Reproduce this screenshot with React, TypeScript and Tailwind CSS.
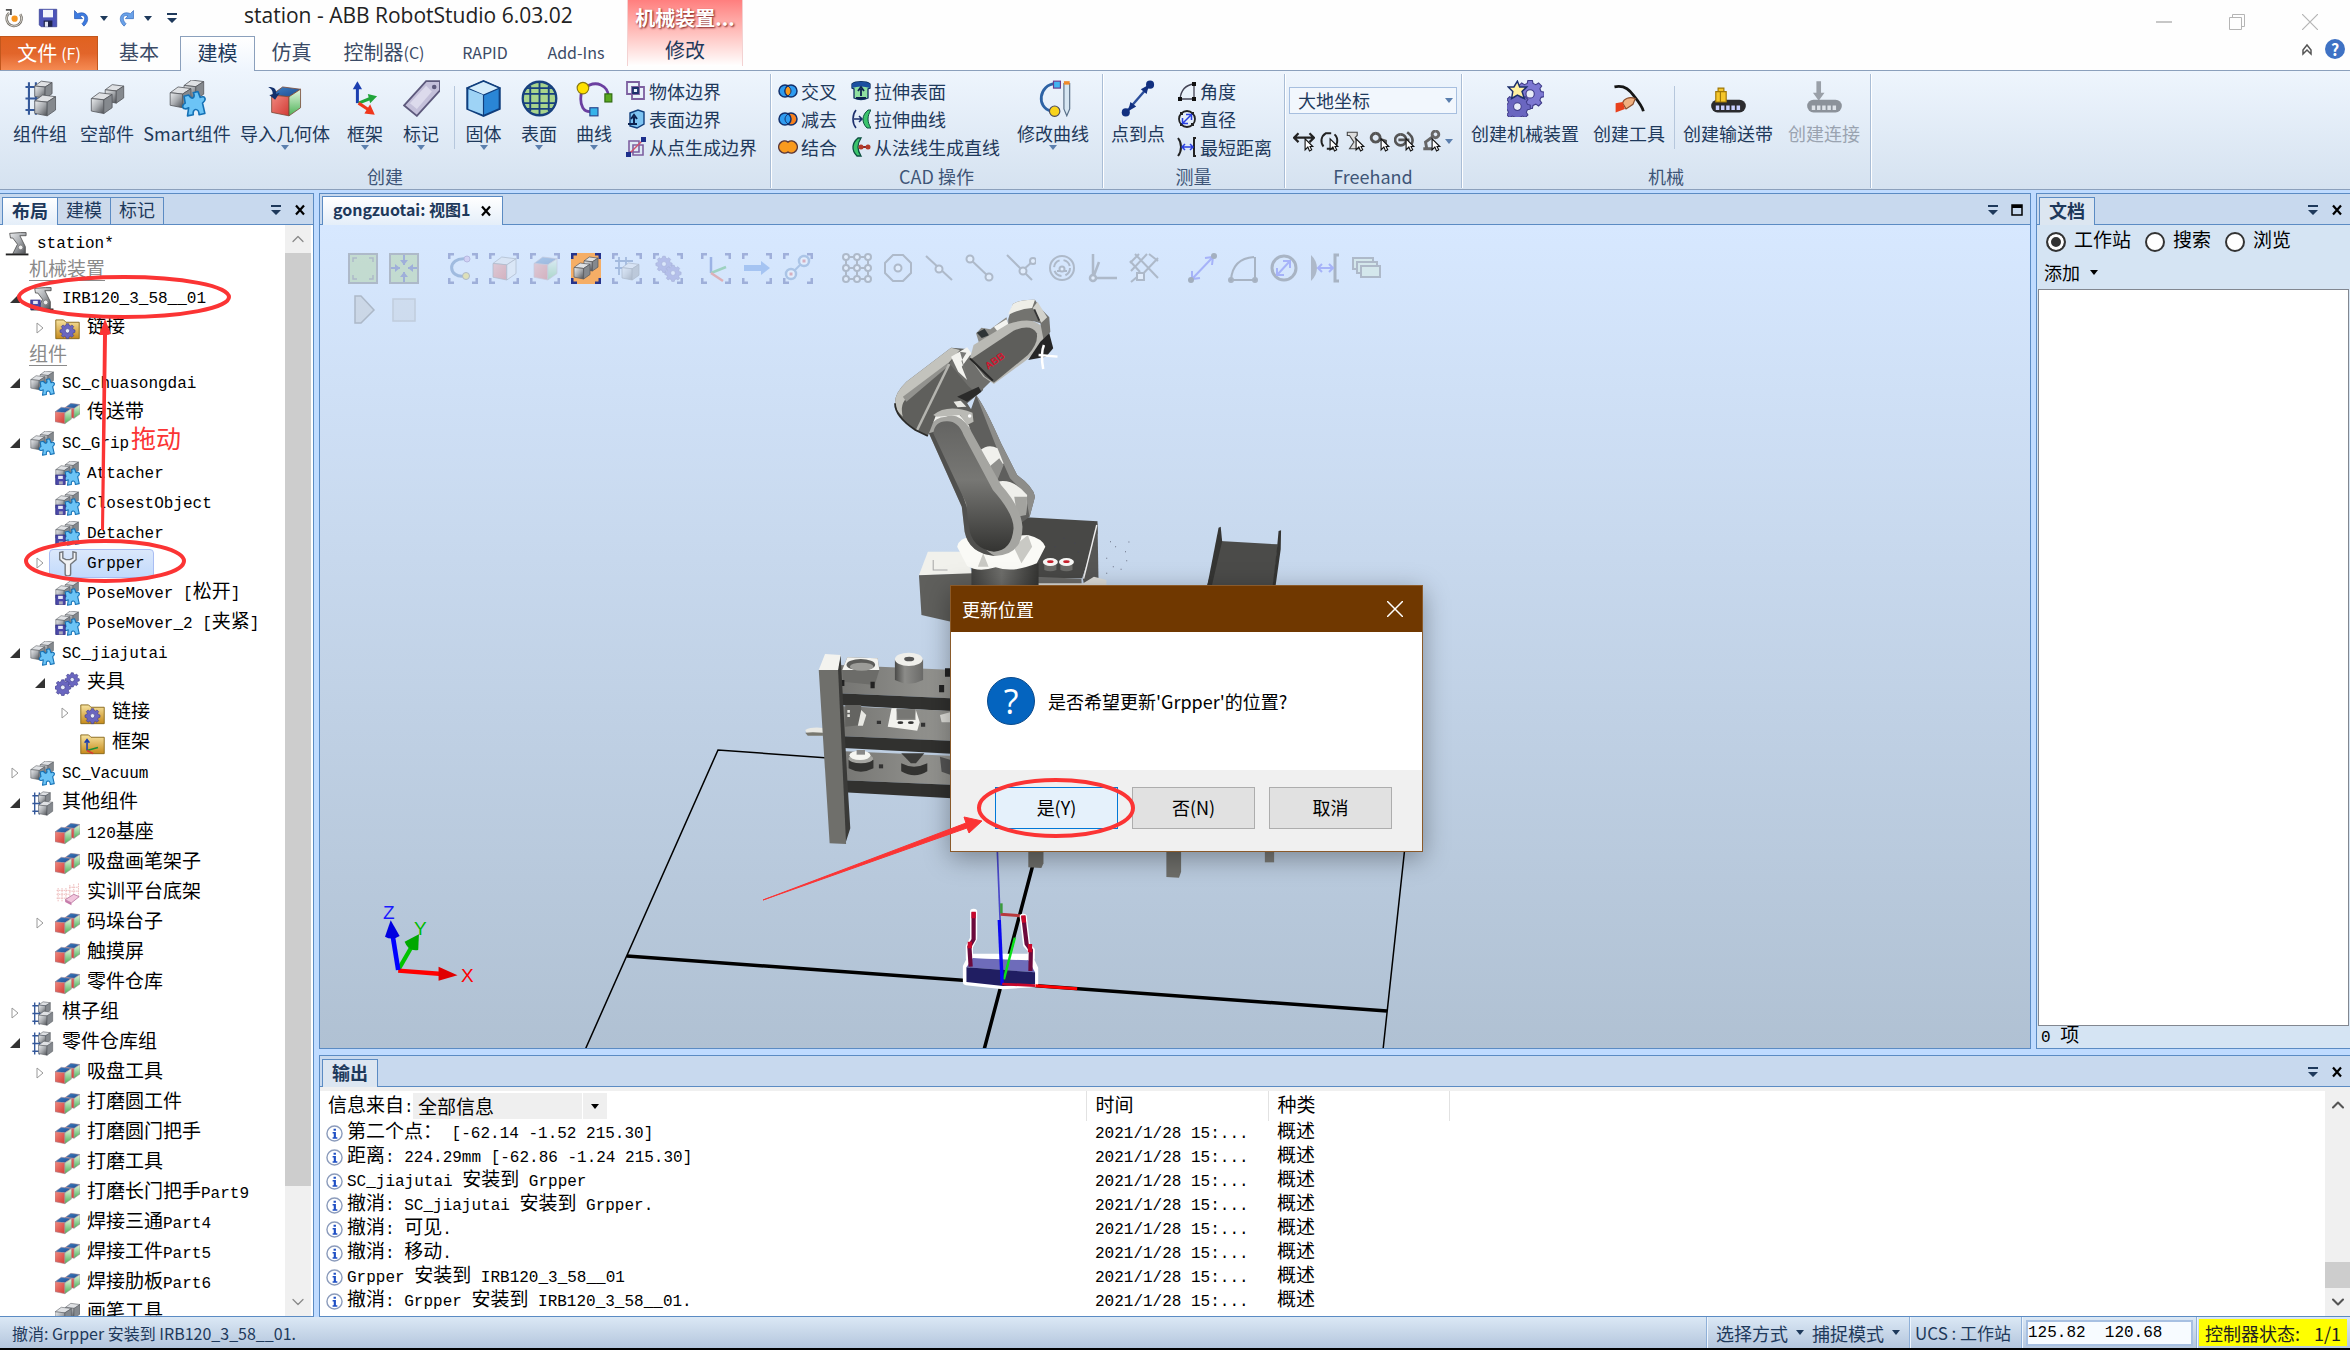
import type { ReactNode } from 'react';
import { ChevronDown, ChevronUp } from 'lucide-react';

/* ---------- text helpers ---------- */

const CJK_RUN = /([\u3000-\u9fff\uff00-\uffef]+)/;

// Terminal-like face: latin runs are set smaller so two latin cells equal one han cell
function Song({ children, underline }: { children: string; underline?: boolean }) {
  return (
    <span
      className={`inline-block whitespace-pre pt-[2px] font-['Liberation_Mono','Noto_Sans_CJK_SC',monospace] text-base ${
        underline ? 'underline underline-offset-4' : ''
      }`}
    >
      {children.split(CJK_RUN).map((run, i) =>
        i % 2 ? (
          <span key={i} className="text-[19px] leading-none">
            {run}
          </span>
        ) : (
          run
        ),
      )}
    </span>
  );
}

/* ---------- small glyphs ---------- */

function Caret({ className = 'text-[#5b7fae]' }: { className?: string }) {
  return (
    <svg viewBox="0 0 8 5" className={`h-[5px] w-2 shrink-0 ${className}`}>
      <path d="M0 0h8L4 5z" fill="currentColor" />
    </svg>
  );
}

function PanelMenuIcon() {
  return (
    <svg viewBox="0 0 12 12" className="h-3 w-3 text-[#1e395b]">
      <path d="M1 1h10v2H1zM1 6h10l-5 5z" fill="currentColor" />
    </svg>
  );
}

function CloseGlyph() {
  return (
    <svg viewBox="0 0 12 12" className="h-3 w-3">
      <path d="M2 1.5 10 10.5M10 1.5 2 10.5" stroke="#000" strokeWidth="2.2" />
    </svg>
  );
}

function Defs() {
  return (
    <svg className="absolute h-0 w-0" aria-hidden="true">
      <defs>
        <linearGradient id="gray" x1="0" y1="0" x2="1" y2="1">
          <stop offset="0" stopColor="#eceef0" />
          <stop offset=".5" stopColor="#a9acb0" />
          <stop offset="1" stopColor="#4c4f54" />
        </linearGradient>
        <linearGradient id="red" x1="0" y1="0" x2="1" y2="1">
          <stop offset="0" stopColor="#f08a80" />
          <stop offset="1" stopColor="#d23a34" />
        </linearGradient>
        <linearGradient id="green" x1="0" y1="0" x2="0" y2="1">
          <stop offset="0" stopColor="#e6f8e2" />
          <stop offset="1" stopColor="#4cb256" />
        </linearGradient>
        <linearGradient id="blue" x1="0" y1="0" x2="1" y2="1">
          <stop offset="0" stopColor="#3f7fc4" />
          <stop offset="1" stopColor="#1d4c90" />
        </linearGradient>
        <linearGradient id="gold" x1="0" y1="0" x2="0" y2="1">
          <stop offset="0" stopColor="#f7e3a0" />
          <stop offset="1" stopColor="#c68a1a" />
        </linearGradient>
        <linearGradient id="arm" x1="0" y1="0" x2="1" y2="0">
          <stop offset="0" stopColor="#4a4a48" />
          <stop offset=".35" stopColor="#8c8c89" />
          <stop offset="1" stopColor="#6a6a68" />
        </linearGradient>
        <linearGradient id="face" x1="0" y1="0" x2="0" y2="1">
          <stop offset="0" stopColor="#646462" />
          <stop offset=".45" stopColor="#777774" />
          <stop offset="1" stopColor="#343432" />
        </linearGradient>
        <linearGradient id="barrel" x1="0" y1="0" x2="1" y2="0">
          <stop offset="0" stopColor="#424240" />
          <stop offset=".45" stopColor="#6e6e6b" />
          <stop offset="1" stopColor="#353533" />
        </linearGradient>
        <linearGradient id="shelf" x1="0" y1="0" x2="1" y2="0">
          <stop offset="0" stopColor="#757572" />
          <stop offset="1" stopColor="#9b9b97" />
        </linearGradient>
      </defs>
    </svg>
  );
}

function Ico({ box = '0 0 32 32', className, children }: { box?: string; className: string; children: ReactNode }) {
  return (
    <svg viewBox={box} className={`shrink-0 ${className}`} fill="none">
      {children}
    </svg>
  );
}

interface CubeProps {
  x: number;
  y: number;
  s: number;
  top?: string;
  front?: string;
  side?: string;
  edge?: string;
}

function Cube({ x, y, s, top = '#dfe1e4', front = 'url(#gray)', side = '#85898e', edge = '#55585d' }: CubeProps) {
  return (
    <g transform={`translate(${x} ${y}) scale(${s})`} stroke={edge} strokeWidth={0.7 / s} strokeLinejoin="round">
      <path d="M0 .28 .38 0 1 .08 .6 .34z" fill={top} />
      <path d="M0 .28 .6 .34V1L0 .88z" fill={front} />
      <path d="M.6 .34 1 .08V.72L.6 1z" fill={side} />
    </g>
  );
}

const COLORED = { top: 'url(#blue)', front: 'url(#red)', side: 'url(#green)', edge: '#a58c98' };

const GEAR = 'M-1.6-8h3.2l.5 2.2 2 .9 2-1.3 2.2 2.2-1.3 2 .9 2 2.2.5v3.2l-2.2.5-.9 2 1.3 2-2.2 2.2-2-1.3-2 .9-.5 2.2h-3.2l-.5-2.2-2-.9-2 1.3-2.2-2.2 1.3-2-.9-2-2.2-.5v-3.2l2.2-.5.9-2-1.3-2 2.2-2.2 2 1.3 2-.9z';

function Gear({ x, y, s, fill = '#6a66c0' }: { x: number; y: number; s: number; fill?: string }) {
  return (
    <g transform={`translate(${x} ${y}) scale(${s})`}>
      <path d={GEAR} transform="translate(0 -1.7)" fill={fill} stroke="#3f3c88" strokeWidth=".8" />
      <circle r="3" cy="0" fill="#e8ecf8" stroke="#3f3c88" strokeWidth=".8" />
    </g>
  );
}

const PUZZLE = 'M1 1l4-1c3 5 6 2 4-2l4-1 2 5c4-2 6 2 2 5l2 9-5 1c0-6-6-6-5 0l-5 1 1-7c-5 3-7-2-3-4z';

function GroupGlyph() {
  return (
    <>
      <path d="M6 2v28M12 2v28M3 6h18M3 16h14M3 26h14" stroke="#34589a" strokeWidth="1.8" />
      <Cube x={11} y={1} s={15} />
      <Cube x={11} y={13} s={18} />
    </>
  );
}

function SmartGlyph() {
  return (
    <>
      <Cube x={13} y={0} s={17} />
      <Cube x={1} y={6} s={18} />
      <path d={PUZZLE} transform="translate(12 13)" fill="#6cc4f6" stroke="#1571b5" strokeWidth="1.4" strokeLinejoin="round" />
    </>
  );
}

function Floppy() {
  return (
    <g>
      <rect x="1" y="18" width="12" height="12" fill="#4b49a8" stroke="#2c2a80" />
      <rect x="4" y="19" width="6" height="4" fill="#e6e8f6" />
      <rect x="5" y="26" width="5" height="4" fill="#aab" />
    </g>
  );
}

function RobotGlyph() {
  return (
    <>
      <path d="M1 30h29" stroke="#222" strokeWidth="2.4" />
      <path d="M6 3l14-1h7v4h-8l7 14v9H10l6-12-6-8H7z" fill="url(#gray)" stroke="#444" />
      <circle cx="20" cy="21" r="3" fill="#eee" stroke="#777" />
    </>
  );
}

/* ---------- tree icons ---------- */

type TreeIcon = 'robot' | 'robotSaved' | 'linkFolder' | 'frameFolder' | 'smart' | 'smartSaved' | 'part' | 'wrench' | 'gears' | 'group' | 'mesh' | 'grayPart';

function TreeGlyph({ icon }: { icon: TreeIcon }) {
  const folder = <path d="M1 5h10l3 3h17v21H1z" fill="url(#gold)" stroke="#8a6a1c" strokeWidth="1.2" />;
  const glyphs: Record<TreeIcon, ReactNode> = {
    robot: <RobotGlyph />,
    robotSaved: (
      <>
        <RobotGlyph />
        <Floppy />
      </>
    ),
    linkFolder: (
      <>
        {folder}
        <Gear x={16} y={19} s={0.95} />
      </>
    ),
    frameFolder: (
      <>
        {folder}
        <path d="M9 25V12M6 15l3-4 3 4" stroke="#1b3fae" strokeWidth="2" />
        <path d="M9 25l14-4" stroke="#1d8f35" strokeWidth="2" />
        <path d="M9 25l8 4" stroke="#d33" strokeWidth="2" />
      </>
    ),
    smart: <SmartGlyph />,
    smartSaved: (
      <>
        <SmartGlyph />
        <Floppy />
      </>
    ),
    part: (
      <>
        <Cube x={13} y={3} s={19} {...COLORED} />
        <Cube x={0} y={8} s={21} {...COLORED} />
      </>
    ),
    wrench: (
      <path
        d="M6 2v9l7 6v12c0 4 7 4 7 0V17l7-6V2l-4-1v8l-4 2h-5l-4-2V1z"
        fill="#f2f3f5"
        stroke="#74787e"
        strokeWidth="1.8"
      />
    ),
    gears: (
      <>
        <Gear x={22} y={11} s={0.9} />
        <Gear x={10} y={21} s={1} />
      </>
    ),
    group: <GroupGlyph />,
    mesh: (
      <>
        <path
          d="M2 12h16M2 17h16M2 22h16M4 9v18M9 9v18M14 9v18M19 5v18M24 4v16M18 8h12M18 13h12M30 3v16"
          stroke="#e9a9a9"
          strokeWidth="1"
          strokeDasharray="2 1"
        />
        <path d="M13 24l11-7 7 3-10 8z" fill="#f2c6dd" stroke="#b3719b" />
        <path d="M13 24l8 4v3l-8-4z" fill="#c77bab" />
      </>
    ),
    grayPart: (
      <>
        <Cube x={13} y={3} s={19} />
        <Cube x={0} y={8} s={21} />
      </>
    ),
  };
  return <Ico className="h-[25px] w-[25px]">{glyphs[icon]}</Ico>;
}

/* ---------- title bar ---------- */

function TitleBar() {
  return (
    <div className="flex h-9 items-center gap-[14px] px-1">
      <Ico className="h-5 w-5">
        <path d="M8 8a12 12 0 1 0 18 2" stroke="#77736c" strokeWidth="4" />
        <path d="M8 8a12 12 0 1 0 18 2" stroke="#d6d2ca" strokeWidth="1.6" />
        <path d="M3 3l8 0v8" stroke="#555" strokeWidth="3" />
        <circle cx="17" cy="17" r="5" fill="#f6951e" />
      </Ico>
      <Ico className="h-5 w-5">
        <path d="M2 2h28v28H5l-3-3z" fill="#4b54b8" stroke="#2c3388" />
        <path d="M8 3h16v12H8z" fill="#f1f4fb" />
        <path d="M9 20h14v10H9z" fill="#20264e" />
        <path d="M11 22h5v8h-5z" fill="#dfe4f4" />
      </Ico>
      <div className="flex items-center gap-2">
        <Ico className="h-5 w-5">
          <path d="M4 4v13h13l-4-4c8-4 10 6 3 12l3 4C31 19 24 3 9 9z" fill="#3d7be0" stroke="#1d4fae" />
        </Ico>
        <Caret className="text-[#1e395b]" />
        <Ico className="h-5 w-5">
          <path d="M28 4v13H15l4-4c-8-4-10 6-3 12l-3 4C1 19 8 3 23 9z" fill="#6aa2e8" stroke="#2b62b8" />
        </Ico>
        <Caret className="text-[#1e395b]" />
      </div>
      <PanelMenuIcon />
      <h1 className="ml-[52px] pb-[7px] font-['Open_Sans','Noto_Sans_CJK_SC',sans-serif] text-[21px] leading-7 text-[#222]">
        station - ABB RobotStudio 6.03.02
      </h1>
      <div className="ml-auto flex items-center gap-[57px] pr-7 pt-2 text-[#b5b5b5]">
        <button aria-label="最小化">
          <Ico box="0 0 16 16" className="h-4 w-4">
            <path d="M0 8h16" stroke="currentColor" strokeWidth="1.5" />
          </Ico>
        </button>
        <button aria-label="还原">
          <Ico box="0 0 16 16" className="h-4 w-4">
            <path d="M.5 3.5h12v12H.5zM3.5 3.5v-3h12v12h-3" stroke="currentColor" />
          </Ico>
        </button>
        <button aria-label="关闭">
          <Ico box="0 0 16 16" className="h-4 w-4">
            <path d="M0 0l16 16M16 0 0 16" stroke="currentColor" strokeWidth="1.2" />
          </Ico>
        </button>
      </div>
    </div>
  );
}

function RibbonTabs() {
  const tab = 'flex h-[34px] items-center justify-center pb-[2px] text-[#3b4b66]';
  return (
    <nav className="relative z-10 flex h-[34px] items-end text-xl leading-6">
      <button className="flex h-[34px] w-[98px] items-center justify-center gap-1 border border-b-0 border-[#c2571d] bg-linear-to-b from-[#e0621f] via-[#e2652a] to-[#f58a52] pb-[2px] text-white">
        文件 <span className="text-base">(F)</span>
      </button>
      <button className={`${tab} w-[82px]`}>基本</button>
      <button className="-mb-px flex h-[35px] w-[75px] items-center justify-center border border-b-0 border-[#8ba0bc] bg-linear-to-b from-white to-[#eef5fd] pb-[2px] text-[#1e395b]">
        建模
      </button>
      <button className={`${tab} w-[73px]`}>仿真</button>
      <button className={`${tab} w-[112px]`}>
        控制器<span className="text-base">(C)</span>
      </button>
      <button className={`${tab} w-[90px] text-base`}>RAPID</button>
      <button className={`${tab} w-[92px] text-base`}>Add-Ins</button>
      <div className="-mt-9 ml-[5px] flex h-[66px] w-[116px] flex-col self-start border-x border-[#f3d2d2] bg-linear-to-b from-[#ff7e7e] to-white">
        <span className="flex h-9 items-center justify-center font-bold text-white [text-shadow:1px_1px_2px_#7a1c1c]">机械装置...</span>
        <button className="flex h-[30px] items-center justify-center pb-[2px] text-[#1e395b]">修改</button>
      </div>
      <div className="ml-auto flex items-center gap-3 self-center pb-2 pr-[5px]">
        <Ico box="0 0 12 14" className="h-[14px] w-3">
          <path d="M2 8 6 3l4 5v4L6 8l-4 4z" stroke="#555" strokeWidth="1.5" />
        </Ico>
        <button className="flex h-5 w-5 items-center justify-center rounded-full bg-[#3f72c4] text-base font-bold leading-5 text-white">?</button>
      </div>
    </nav>
  );
}

/* ---------- ribbon ---------- */

interface LargeProps {
  label: string;
  width: string;
  menu?: boolean;
  disabled?: boolean;
  children: ReactNode;
}

function Large({ label, width, menu, disabled, children }: LargeProps) {
  return (
    <button
      disabled={disabled}
      className={`flex shrink-0 flex-col items-center whitespace-nowrap pt-[6px] ${width} ${disabled ? 'text-[#9aa3b0]' : 'text-[#1e395b]'}`}
    >
      <Ico className="h-[37px] w-[37px]">{children}</Ico>
      <span className="mt-[5px] text-lg leading-[22px]">{label}</span>
      {menu && <Caret className="mt-px text-[#5b7fae]" />}
    </button>
  );
}

function Small({ label, children }: { label: string; children: ReactNode }) {
  return (
    <button className="flex h-7 items-center gap-[3px] whitespace-nowrap text-lg leading-[22px] text-[#1e395b]">
      <Ico box="0 0 20 20" className="h-5 w-5">
        {children}
      </Ico>
      {label}
    </button>
  );
}

function Group({ title, width, children }: { title: string; width: string; children: ReactNode }) {
  return (
    <section className={`flex shrink-0 flex-col border-r border-[#a9bdd6] shadow-[1px_0_0_#fff] ${width}`}>
      <div className="flex flex-1">{children}</div>
      <h2 className="pb-px text-center text-lg leading-[22px] text-[#3e5577]">{title}</h2>
    </section>
  );
}

const Divider = () => <div className="mb-4 mt-3 w-px shrink-0 bg-[#b6c7dc]" />;

function Ribbon() {
  return (
    <div className="flex h-[120px] shrink-0 border-y border-[#8ba0bc] bg-linear-to-b from-[#eef5fd] to-[#d5e2f0] pb-px pt-[3px]">
      <Group title="创建" width="basis-[771px]">
        <Large label="组件组" width="w-[72px] ml-1">
          <GroupGlyph />
        </Large>
        <Large label="空部件" width="w-[62px]">
          <Cube x={14} y={4} s={16} />
          <Cube x={2} y={11} s={18} />
        </Large>
        <Large label="Smart组件" width="w-[98px]">
          <SmartGlyph />
        </Large>
        <Large label="导入几何体" width="w-[98px]" menu>
          <Cube x={4} y={6} s={25} top="url(#blue)" front="url(#red)" side="url(#green)" edge="#7a4a38" />
          <path d="M1 6c6 0 7 2 7 6l3-1-4 6-5-4 3-.5C5 9 4 8 1 6z" fill="#12306c" />
        </Large>
        <Large label="框架" width="w-[62px]" menu>
          <path d="M9 20V6" stroke="#1c3fb0" strokeWidth="2.6" />
          <path d="M5 8l4-7 4 7z" fill="#1c3fb0" />
          <path d="M10 20l10-4" stroke="#21a53a" strokeWidth="2.6" />
          <path d="M18 12l8 2-6 6z" fill="#21a53a" />
          <path d="M10 20l9 6" stroke="#f0371c" strokeWidth="2.6" />
          <path d="M20 21l4 9-9-1z" fill="#f0371c" />
        </Large>
        <Large label="标记" width="w-[50px]" menu>
          <path d="M20 1h12v8L12 31 1 22z" fill="#c4c0da" stroke="#5d597c" strokeWidth="1.6" />
          <path d="M20 5l5 5-13 15-6-5z" fill="#dcdaec" />
          <circle cx="27" cy="6" r="2" fill="#5d597c" />
        </Large>
        <div className="w-2" />
        <Divider />
        <Large label="固体" width="w-[57px]" menu>
          <path d="M2 7 16 1l14 6v18l-14 6-14-6z" fill="#2a86d6" stroke="#103e7c" strokeWidth="1.8" />
          <path d="M2 7l14 6 14-6-14-6z" fill="#d4ecfb" stroke="#103e7c" />
          <path d="M3 8l13 5v17L3 25z" fill="#9ed3f6" />
          <path d="M16 13v18" stroke="#103e7c" />
        </Large>
        <Large label="表面" width="w-[54px]" menu>
          <circle cx="16" cy="16" r="14.5" fill="#a8d48c" stroke="#17407e" strokeWidth="2" />
          <path d="M2 12h28M2 20h28M5 7h22M5 25h22M8 5v22M16 2v28M24 5v22" stroke="#17407e" strokeWidth="1.6" />
        </Large>
        <Large label="曲线" width="w-14" menu>
          <path d="M6 8C18-2 28 6 28 14M5 9c-3 14 2 20 10 18" stroke="#6b3fa0" strokeWidth="2.4" />
          <circle cx="6" cy="7" r="5" fill="#ffe100" stroke="#8a7a10" />
          <rect x="25" y="12" width="6" height="7" fill="#5aa820" stroke="#2f6a10" />
          <rect x="12" y="24" width="7" height="7" fill="#36b3ea" stroke="#28458c" />
        </Large>
        <div className="ml-1 flex flex-col pt-[3px]">
          <Small label="物体边界">
            <path d="M1 1h12v12H1zM6 6h12v12H6z" stroke="#7d5fa0" strokeWidth="1.8" />
            <path d="M7 7h5v5H7z" stroke="#1c2f6c" strokeWidth="1.8" />
          </Small>
          <Small label="表面边界">
            <path d="M4 4l8-3 6 2v12l-7 4-7-2z" fill="#7ec4f2" stroke="#103e7c" strokeWidth="1.4" />
            <path d="M8 15V8M5 10l3-4 3 4M2 15h9" stroke="#0d2250" strokeWidth="2" />
          </Small>
          <Small label="从点生成边界">
            <path d="M3 4h10v11H3zM7 8h10v10H7z" stroke="#7d5fa0" strokeWidth="1.6" />
            <path d="M3 17 17 3" stroke="#d0506c" strokeWidth="1.4" />
            <path d="M0 15h5v5H0zM15 0h5v5h-5z" fill="#1c2f8c" />
          </Small>
        </div>
      </Group>

      <Group title="CAD 操作" width="basis-[330px]">
        <div className="ml-[7px] flex flex-col pt-[3px]">
          <Small label="交叉">
            <circle cx="7" cy="10" r="6" fill="#2f9cf0" stroke="#12306c" strokeWidth="1.5" />
            <circle cx="13" cy="10" r="6" fill="#2f9cf0" stroke="#12306c" strokeWidth="1.5" />
            <path d="M10 5c4 3 4 7 0 10-4-3-4-7 0-10z" fill="#f79a1c" stroke="#12306c" />
          </Small>
          <Small label="减去">
            <circle cx="13" cy="10" r="6" fill="#f7801c" stroke="#12306c" strokeWidth="1.5" />
            <circle cx="7" cy="10" r="6" fill="#2f9cf0" stroke="#12306c" strokeWidth="1.5" />
            <path d="M10 5c-4 3-4 7 0 10" stroke="#12306c" />
          </Small>
          <Small label="结合">
            <path d="M10 5a6 6 0 1 0 0 10 6 6 0 1 0 0-10z" fill="#f99a1e" stroke="#5c3a3c" strokeWidth="1.5" />
          </Small>
        </div>
        <div className="ml-[14px] flex flex-col pt-[3px]">
          <Small label="拉伸表面">
            <path d="M1 3c4-3 14-3 18 0v4l-2 1v9c-4 2-10 2-14 0V8L1 7z" fill="#8fe0a0" stroke="#0d2f60" strokeWidth="1.3" />
            <path d="M1 3c4-3 14-3 18 0v4c-6-2-12-2-18 0z" fill="#1c4fa0" />
            <path d="M10 15V8M7 10l3-4 3 4M5 17h10" stroke="#0d2250" strokeWidth="1.8" />
          </Small>
          <Small label="拉伸曲线">
            <path d="M5 1C1 6 1 14 5 19" stroke="#1c2f6c" strokeWidth="1.6" />
            <path d="M3 10h7M8 7l3 3-3 3" stroke="#1c2f6c" strokeWidth="1.5" />
            <path d="M17 1h3c-4 6-4 12 0 18h-4C10 13 11 6 17 1z" fill="#3cc46c" stroke="#0d5040" />
          </Small>
          <Small label="从法线生成直线">
            <path d="M7 1h3c-4 6-4 12 0 18H6C0 13 1 6 7 1z" fill="#3cc46c" stroke="#0d5040" strokeWidth="1.3" />
            <path d="M8 10h8" stroke="#8a2a2a" strokeWidth="2" />
            <circle cx="10" cy="10" r="2.5" fill="#b33a2a" />
            <circle cx="17" cy="10" r="2.5" fill="#b33a2a" />
          </Small>
        </div>
        <Large label="修改曲线" width="w-[98px] ml-1" menu>
          <path d="M18 3C3 4 1 24 14 27" stroke="#2d62a4" strokeWidth="2.4" />
          <rect x="16" y="1" width="6" height="6" fill="#42b4f0" stroke="#6a3a8c" />
          <circle cx="17" cy="27" r="4.5" fill="#f9d41c" stroke="#4a4a60" />
          <path d="M25 3h5v22l-2.5 6L25 25z" fill="#d6e6f2" stroke="#5a7088" />
          <path d="M25 1h5v3h-5z" fill="#f08a2a" />
        </Large>
      </Group>

      <Group title="测量" width="basis-[182px]">
        <Large label="点到点" width="w-[70px]">
          <path d="M6 27 26 4" stroke="#2c4f9c" strokeWidth="2" />
          <path d="M18 8l7-4-2 8zM14 23l-7 4 2-8z" fill="#123080" />
          <circle cx="26" cy="4" r="3.5" fill="#123080" />
          <circle cx="5" cy="28" r="3.5" fill="#123080" />
        </Large>
        <div className="ml-1 flex flex-col pt-[3px]">
          <Small label="角度">
            <path d="M3 18C4 9 8 4 17 3M3 18h14V3" stroke="#445" strokeWidth="1.3" />
            <path d="M1 16h4v4H1zM15 16h4v4h-4zM15 1h4v4h-4z" fill="#111" />
          </Small>
          <Small label="直径">
            <circle cx="10" cy="10" r="8" stroke="#222" strokeWidth="1.8" />
            <path d="M3 3h3v3H3zM14 3h3v3h-3zM3 14h3v3H3zM14 14h3v3h-3z" fill="#222" />
            <path d="M6 14l8-8M9 5.5h5.5V11M11 14.5H5.5V9" stroke="#2a40e0" strokeWidth="1.5" />
          </Small>
          <Small label="最短距离">
            <path d="M1 1c4 5 4 13 0 18M19 1h-2v18h2" stroke="#222" strokeWidth="2" />
            <path d="M5 10h11M8 7l-3 3 3 3M13 7l3 3-3 3" stroke="#2a40e0" strokeWidth="1.5" />
          </Small>
        </div>
      </Group>

      <Group title="Freehand" width="basis-[177px]">
        <div className="flex flex-1 flex-col px-1 pt-[13px]">
          <div className="relative">
            <select
              aria-label="参考坐标系"
              className="h-[27px] w-full appearance-none border border-[#a7bfdf] bg-[#f2f7fd] px-2 text-lg leading-[25px] text-[#1e395b]"
            >
              <option>大地坐标</option>
            </select>
            <span className="pointer-events-none absolute inset-y-0 right-1 flex items-center">
              <Caret />
            </span>
          </div>
          <div className="mt-4 flex items-center justify-between px-1">
            {[
              <path key="a" d="M1 7h18M5 3 1 7l4 4M15 3l4 4-4 4" stroke="#222" strokeWidth="2" />,
              <path key="b" d="M5 15A8 8 0 0 1 7 3h5M15 4a8 8 0 0 1-2 13H8" stroke="#222" strokeWidth="1.8" />,
              <path key="c" d="M3 2h9v3l-2 2 4 6v4H5l4-6-4-6H3z" fill="#ddd" stroke="#444" />,
              <path key="d" d="M6 3a4 4 0 1 0 .1 0M9 8l6 2v4" stroke="#555" strokeWidth="2.6" />,
              <path key="e" d="M6 4a5 5 0 1 0 .1 0M4 9h10M12 2c7 5 6 11 0 14" stroke="#555" strokeWidth="2.4" />,
              <path key="f" d="M3 17h8M6 16l-1-5 8-6M14 1a3 3 0 1 0 .1 0" stroke="#666" strokeWidth="2.6" />,
            ].map((shape, i) => (
              <button key={i}>
                <Ico box="0 0 20 20" className="h-[22px] w-[22px]">
                  {shape}
                  <path d="M11 8v10l2.5-2.5L15 19l2-1-1.5-3H18z" fill="#fff" stroke="#111" />
                </Ico>
              </button>
            ))}
            <Caret />
          </div>
        </div>
      </Group>

      <Group title="机械" width="basis-[409px]">
        <Large label="创建机械装置" width="w-[126px]">
          <Gear x={20} y={12} s={1.2} fill="#7d78d2" />
          <Gear x={9} y={23} s={1.1} />
          <path d="M9 1l2 5 6 0-4 4 2 6-6-3-5 3 1-6-4-4h5z" fill="#fff0a0" stroke="#1c2f6c" strokeWidth="1.3" />
        </Large>
        <Large label="创建工具" width="w-[82px]">
          <path d="M3 6c10-2 14 4 17 8 4 5 7 9 8 13" stroke="#161616" strokeWidth="2.4" />
          <path d="M10 20c1-4 6-6 11-4l-2 5-6 4z" fill="#f0b080" stroke="#8a5030" />
          <path d="M4 20l6-1 2 6-8 3z" fill="#e8401c" />
        </Large>
        <div className="w-1" />
        <Divider />
        <Large label="创建输送带" width="w-[106px]">
          <rect x="1" y="17" width="30" height="11" rx="5.5" fill="#2b2b2e" />
          <path d="M5 24h22" stroke="#c9d0ff" strokeWidth="4" strokeDasharray="3 1.5" />
          <path d="M5 10h9v9H5zM7 7h5v3H7zM9 10v9" fill="#f5c62a" stroke="#a07808" />
        </Large>
        <Large label="创建连接" width="w-[86px]" disabled>
          <path d="M9 1h4v10h3l-5 7-5-7h3z" fill="#9aa0a8" />
          <rect x="1" y="17" width="30" height="11" rx="5.5" fill="#8c929a" />
          <path d="M5 24h22" stroke="#dde2e8" strokeWidth="4" strokeDasharray="3 1.5" />
        </Large>
      </Group>
    </div>
  );
}

/* ---------- docked panel header ---------- */

function DockHeader({ children, action }: { children: ReactNode; action?: ReactNode }) {
  return (
    <div className="flex h-[31px] shrink-0 items-end border-b border-[#5b8bc3] bg-[#c8d9ee] pl-[2px]">
      {children}
      <div className="ml-auto flex items-center gap-3 self-center pr-[7px] pt-[2px]">
        <button aria-label="窗口选项">
          <PanelMenuIcon />
        </button>
        <button aria-label="关闭面板">{action ?? <CloseGlyph />}</button>
      </div>
    </div>
  );
}

const DOCK_TAB = '-mb-px flex items-center whitespace-nowrap border border-[#5b8bc3] pb-1 text-lg leading-6 text-[#1e395b]';

/* ---------- layout tree ---------- */

interface TreeRow {
  level: number;
  label: string;
  icon?: TreeIcon;
  open?: boolean;
  selected?: boolean;
}

const TREE: TreeRow[] = [
  { level: 0, label: 'station*', icon: 'robot' },
  { level: 1, label: '机械装置' },
  { level: 1, label: 'IRB120_3_58__01', icon: 'robotSaved', open: true },
  { level: 2, label: '链接', icon: 'linkFolder', open: false },
  { level: 1, label: '组件' },
  { level: 1, label: 'SC_chuasongdai', icon: 'smart', open: true },
  { level: 2, label: '传送带', icon: 'part' },
  { level: 1, label: 'SC_Grip', icon: 'smart', open: true },
  { level: 2, label: 'Attacher', icon: 'smartSaved' },
  { level: 2, label: 'ClosestObject', icon: 'smartSaved' },
  { level: 2, label: 'Detacher', icon: 'smartSaved' },
  { level: 2, label: 'Grpper', icon: 'wrench', open: false, selected: true },
  { level: 2, label: 'PoseMover [松开]', icon: 'smartSaved' },
  { level: 2, label: 'PoseMover_2 [夹紧]', icon: 'smartSaved' },
  { level: 1, label: 'SC_jiajutai', icon: 'smart', open: true },
  { level: 2, label: '夹具', icon: 'gears', open: true },
  { level: 3, label: '链接', icon: 'linkFolder', open: false },
  { level: 3, label: '框架', icon: 'frameFolder' },
  { level: 1, label: 'SC_Vacuum', icon: 'smart', open: false },
  { level: 1, label: '其他组件', icon: 'group', open: true },
  { level: 2, label: '120基座', icon: 'part' },
  { level: 2, label: '吸盘画笔架子', icon: 'part' },
  { level: 2, label: '实训平台底架', icon: 'mesh' },
  { level: 2, label: '码垛台子', icon: 'part', open: false },
  { level: 2, label: '触摸屏', icon: 'part' },
  { level: 2, label: '零件仓库', icon: 'part' },
  { level: 1, label: '棋子组', icon: 'group', open: false },
  { level: 1, label: '零件仓库组', icon: 'group', open: true },
  { level: 2, label: '吸盘工具', icon: 'part', open: false },
  { level: 2, label: '打磨圆工件', icon: 'part' },
  { level: 2, label: '打磨圆门把手', icon: 'part' },
  { level: 2, label: '打磨工具', icon: 'part' },
  { level: 2, label: '打磨长门把手Part9', icon: 'part' },
  { level: 2, label: '焊接三通Part4', icon: 'part' },
  { level: 2, label: '焊接工件Part5', icon: 'part' },
  { level: 2, label: '焊接肋板Part6', icon: 'part' },
  { level: 2, label: '画笔工具', icon: 'grayPart' },
];

const INDENT = ['pl-[5px]', 'pl-[5px]', 'pl-[30px]', 'pl-[55px]'];

function TreeItem({ row }: { row: TreeRow }) {
  if (!row.icon) {
    return (
      <li className="flex h-[25px] items-center pl-[29px] text-[#8a8a8a]">
        <Song underline>{row.label}</Song>
      </li>
    );
  }
  return (
    <li className={`flex h-[30px] items-center ${INDENT[row.level]}`}>
      {row.level > 0 && (
        <span className="w-[25px] shrink-0 pl-1">
          {row.open !== undefined && (
            <Ico box="0 0 12 12" className="h-3 w-3">
              {row.open ? <path d="M11 1v10H1z" fill="#333" /> : <path d="M3 1l6 5-6 5z" fill="#fff" stroke="#999" />}
            </Ico>
          )}
        </span>
      )}
      <span
        className={`flex h-[29px] items-center gap-[7px] whitespace-nowrap ${
          row.selected ? '-ml-[6px] rounded-sm border border-[#a9bdf3] bg-linear-to-b from-[#dbe8fb] to-[#c2dafc] pl-[5px] pr-2' : ''
        }`}
      >
        <TreeGlyph icon={row.icon} />
        <Song>{row.label}</Song>
      </span>
    </li>
  );
}

function LayoutPanel() {
  return (
    <aside className="relative flex w-[314px] shrink-0 flex-col border border-l-0 border-[#5b8bc3] bg-white">
      <DockHeader>
        <button className={`${DOCK_TAB} h-7 border-b-0 bg-linear-to-b from-white to-[#e4eef9] px-[9px] font-bold`}>布局</button>
        <button className={`${DOCK_TAB} h-7 border-l-0 bg-[#cddaeb] px-2`}>建模</button>
        <button className={`${DOCK_TAB} h-7 border-l-0 bg-[#cddaeb] px-2`}>标记</button>
      </DockHeader>
      <div className="flex min-h-0 flex-1">
        <ul className="min-w-0 flex-1 overflow-hidden pt-[3px] text-black">
          {TREE.map((row, i) => (
            <TreeItem key={i} row={row} />
          ))}
        </ul>
        <div className="mr-[2px] flex w-[26px] shrink-0 flex-col items-center bg-[#f0f0f0] text-[#8a8a8a]">
          <ChevronUp className="h-7 w-5 shrink-0" strokeWidth={1.5} />
          <div className="w-full flex-[930] bg-[#cdcdcd]" />
          <div className="flex-[102]" />
          <ChevronDown className="h-7 w-5 shrink-0" strokeWidth={1.5} />
        </div>
      </div>
      <svg className="pointer-events-none absolute left-0 top-0" width="314" height="420" viewBox="0 193 314 420" fill="none">
        <ellipse cx="124" cy="296" rx="105" ry="20" stroke="#fb3434" strokeWidth="4" />
        <ellipse cx="105" cy="560" rx="79" ry="20" stroke="#fb3434" strokeWidth="4" />
        <path d="M101 529 103 334l-4 0 6-16 6 15-4 1-3 195z" fill="#fb3434" />
        <text x="131" y="447" fontSize="25" fill="#fb3434" fontFamily="'Noto Sans CJK SC', sans-serif">
          拖动
        </text>
      </svg>
    </aside>
  );
}

/* ---------- viewport ---------- */

const BRACKETS = <path d="M1 6V1h5M24 1h5v5M1 25v5h5M24 30h5v-5" stroke="#26348c" strokeWidth="3" />;

const TOOL_GROUPS: ReactNode[][] = [
  [
    <g key="fit">
      <path d="M1 1h28v29H1z" fill="#9cc56c" stroke="#555" strokeWidth="2" />
      <path d="M5 9V5h4M21 5h4v4M5 22v4h4M21 26h4v-4" stroke="#555" strokeWidth="1.5" />
    </g>,
    <g key="center">
      <path d="M1 1h28v29H1z" fill="#9cc56c" stroke="#555" strokeWidth="2" />
      <path d="M15 2v10M15 29V19M2 15h9M28 15h-9" stroke="#26348c" strokeWidth="2" />
      <path d="M11 7h8l-4 5zM11 24h8l-4-5zM6 11v8l5-4zM24 11v8l-5-4z" fill="#26348c" />
    </g>,
  ],
  [
    <g key="curve">
      {BRACKETS}
      <path d="M18 6C-2 4 0 26 17 23" stroke="#285a9c" strokeWidth="3" />
      <circle cx="19" cy="6" r="3" fill="#c8a0e0" stroke="#7050a0" />
      <circle cx="18" cy="23" r="3.5" fill="#f3d51e" stroke="#555" />
    </g>,
    <g key="face">
      {BRACKETS}
      <Cube x={4} y={4} s={23} front="url(#red)" side="#e8eaec" />
    </g>,
    <g key="body">
      {BRACKETS}
      <Cube x={4} y={4} s={23} {...COLORED} />
    </g>,
    <g key="part">
      <path d="M0 0h30v31H0z" fill="#f5ae66" />
      {BRACKETS}
      <Cube x={13} y={4} s={14} />
      <Cube x={3} y={10} s={16} />
    </g>,
    <g key="group">
      {BRACKETS}
      <path d="M7 4v18M14 4v12M3 8h18M3 15h12" stroke="#34589a" strokeWidth="1.8" />
      <Cube x={10} y={10} s={17} />
    </g>,
    <g key="mech">
      {BRACKETS}
      <Gear x={11} y={11} s={0.8} />
      <Gear x={20} y={20} s={0.8} />
    </g>,
  ],
  [
    <g key="frame">
      {BRACKETS}
      <path d="M10 20V4" stroke="#1c3fb0" strokeWidth="2.5" />
      <path d="m10 20 15-6" stroke="#21a53a" strokeWidth="2.5" />
      <path d="m10 20 12 8" stroke="#f0371c" strokeWidth="2.5" />
    </g>,
    <g key="arrow">
      {BRACKETS}
      <path d="M2 12h17V8l9 7-9 7v-4H2z" fill="#3a78dc" />
    </g>,
    <g key="path">
      {BRACKETS}
      <path d="M8 21 21 8" stroke="#4a78b4" strokeWidth="2" />
      <circle cx="8" cy="21" r="5" fill="#fff" stroke="#4a78b4" strokeWidth="2.5" />
      <circle cx="21" cy="8" r="5" fill="#fff" stroke="#4a78b4" strokeWidth="2.5" />
      <path d="M6.5 19.5h3v3h-3zM19.5 6.5h3v3h-3z" fill="#d33" />
    </g>,
  ],
  [
    <g key="grid" stroke="#555" strokeWidth="2">
      <path d="M4 4h22v22H4zM15 4v22M4 15h22" />
      {[4, 15, 26].flatMap((x) => [4, 15, 26].map((y) => <circle key={`${x}-${y}`} cx={x} cy={y} r="3" fill="#fff" />))}
    </g>,
    <g key="oct" stroke="#555" strokeWidth="2">
      <path d="M10 2h10l8 8v10l-8 8H10l-8-8V10z" />
      <circle cx="15" cy="15" r="3.5" fill="#fff" />
    </g>,
    <g key="mid" stroke="#555" strokeWidth="2">
      <path d="m2 3 26 24" />
      <circle cx="15" cy="16" r="3.5" fill="#fff" />
    </g>,
    <g key="end" stroke="#555" strokeWidth="2">
      <path d="m5 6 19 18" />
      <circle cx="5" cy="6" r="3.5" fill="#fff" />
      <circle cx="24" cy="24" r="3.5" fill="#fff" />
    </g>,
    <g key="edge" stroke="#555" strokeWidth="2">
      <path d="m1 2 25 25M16 18 27 8" />
      <circle cx="17" cy="18" r="3.5" fill="#fff" />
      <circle cx="27" cy="8" r="3" fill="#fff" />
    </g>,
    <g key="origin" stroke="#555" strokeWidth="2">
      <circle cx="15" cy="15" r="12" />
      <circle cx="15" cy="15" r="8" strokeDasharray="9 4" />
      <path d="M15 13v5M10 18h10" />
      <circle cx="15" cy="16" r="2.5" fill="#fff" />
    </g>,
    <g key="corner" stroke="#555" strokeWidth="2.5">
      <path d="M5 1v24h24M5 25 11 9" />
      <circle cx="5" cy="25" r="3" fill="#fff" />
    </g>,
    <g key="cross" stroke="#555" strokeWidth="2">
      <path d="M6 1 29 25M29 5 10 25M1 10 10 1M1 8l10 11M18 1 2 18M2 29l6-5M20 1l9 7" />
      <path d="M8 20h7v7H8z" fill="#fff" />
    </g>,
  ],
  [
    <g key="dist">
      <path d="M5 26 26 4M18 5l8-1-1 8M5 18v8l8-1" stroke="#3d40f0" strokeWidth="2" />
      <circle cx="4" cy="27" r="3" fill="#333" />
      <circle cx="27" cy="3" r="3" fill="#333" />
    </g>,
    <g key="angle" stroke="#444" strokeWidth="2">
      <path d="M3 27C4 13 12 5 26 4M3 27h24V4" />
      <circle cx="3" cy="27" r="2" fill="#333" />
      <circle cx="27" cy="27" r="2" fill="#333" />
    </g>,
    <g key="dia">
      <circle cx="15" cy="15" r="12" stroke="#444" strokeWidth="3" />
      <path d="m8 22 13-14M14 8h7v7M15 22H8v-7" stroke="#3d40f0" strokeWidth="2" />
    </g>,
    <g key="min">
      <path d="M1 2c8 8 8 18 0 26z" fill="#555" />
      <path d="M29 2h-4v26h4" stroke="#444" strokeWidth="3" />
      <path d="M8 15h15M12 11l-4 4 4 4M19 11l4 4-4 4" stroke="#3d40f0" strokeWidth="2" />
    </g>,
    <g key="mark" stroke="#555" strokeWidth="2" fill="#d3ecc8">
      <path d="M2 5h20v11H2z" />
      <path d="M6 9h20v11H6z" />
      <path d="M10 13h19v11H10z" />
    </g>,
  ],
];

const TOOL_GAPS = ['', 'ml-[29px]', 'ml-[18px]', 'ml-[29px]', 'ml-[28px]'];

function ViewToolbar() {
  return (
    <div className="absolute left-7 top-7 flex flex-col gap-[10px]">
      <div className="flex">
        {TOOL_GROUPS.map((group, g) => (
          <div key={g} className={`flex gap-[11px] ${TOOL_GAPS[g]}`}>
            {group.map((shape, i) => (
              <button key={i} className={g === 1 && i === 3 ? '' : 'opacity-30'}>
                <Ico box="0 0 30 31" className="h-[31px] w-[30px]">
                  {shape}
                </Ico>
              </button>
            ))}
          </div>
        ))}
      </div>
      <div className="flex gap-[11px] opacity-30">
        <button aria-label="播放">
          <Ico box="0 0 30 31" className="h-[31px] w-[30px]">
            <path d="M7 2v27h6L26 16 13 2z" fill="#bbb" stroke="#555" strokeWidth="1.5" />
          </Ico>
        </button>
        <button aria-label="停止">
          <Ico box="0 0 30 31" className="h-[31px] w-[30px]">
            <path d="M4 5h22v22H4z" fill="#c4ccd4" stroke="#999" strokeWidth="1.5" />
          </Ico>
        </button>
      </div>
    </div>
  );
}

function Floor() {
  return (
    <g stroke="#000">
      <path d="M585 1050 718 750 1410 800 1383 1050" strokeWidth="1.5" />
      <path d="M627 956 1387 1011M1050 800 984 1050" strokeWidth="3.5" />
    </g>
  );
}

function RobotArm() {
  return (
    <g transform="translate(860 230) scale(.35714 .33333)">
      {/* bench behind the arm */}
      <path d="M440 860 665 874 665 910 622 1045 440 1045z" fill="#484846" />
      <path d="M665 878 668 1062 628 1068 624 1046z" fill="#565654" />
      <path d="M663 885 626 1046" stroke="#eee" strokeWidth="4" />
      <path d="M490 1040 620 1046 622 1110 490 1110z" fill="#6b6b69" />
      <path d="M490 1060h135l30-20 35 10v20H490z" fill="#dcdcd8" />
      {[533, 578].map((x) => (
        <g key={x}>
          <path d={`M${x - 17} 998v22q17 8 34 0v-22z`} fill="#6c6c69" />
          <ellipse cx={x} cy="996" rx="21" ry="12" fill="#f6f6f4" />
          <ellipse cx={x} cy="995" rx="9" ry="4" fill="#c6202c" />
        </g>
      ))}
      <path d="M700 935h2M715 950h2M752 936h2M690 985h2M742 965h2M708 1010h2M746 992h2M690 1030h2M730 1018h2M600 940h3M570 925h3M610 965h3M545 950h3" stroke="#445" strokeWidth="3" />
      {/* base */}
      <path d="M190 965 290 965 315 1032 165 1036z" fill="#f1f1ec" />
      <path d="M205 990v30h40" stroke="#aaa" strokeWidth="3" />
      <path d="M165 1036 315 1030V1180L255 1175 172 1155z" fill="#5f5f5c" />
      <path d="M312 1000H500V1110H312z" fill="url(#barrel)" />
      <path d="M272 950Q280 915 330 925L470 915Q510 925 519 950L495 1000Q430 1030 380 1012 330 1028 300 1008z" fill="#fafaf6" />
      <path d="M430 950l40-35 12 35-30 50zM345 970l15 40h-30z" fill="#c9c9c4" />
      {/* rear plate */}
      <path d="M325 495Q350 530 395 640L440 735Q485 770 490 800L475 860 450 880 290 600z" fill="#5f5f5d" />
      <path d="M325 495Q350 530 395 640L440 735Q485 770 490 800L475 860 462 790 420 745 385 660z" fill="#8d8d8a" />
      <path d="M337 660Q360 640 385 655L402 700 385 745 360 700z" fill="#f0f0ec" />
      <path d="M362 710l28-25 12 20-17 45z" fill="#8f8f8c" />
      <path d="M385 755Q430 745 468 795L465 850 440 860z" fill="#efefeb" />
      <path d="M432 800l36 0-3 55-25 5z" fill="#a3a39f" />
      {/* lower arm */}
      <path d="M193 610Q190 548 245 545 290 545 312 605L395 765Q450 830 455 890 455 975 378 978 305 970 293 905L285 830z" fill="#a5a5a1" />
      <path d="M193 610 285 830 293 905Q305 970 378 978 330 950 318 890L225 600z" fill="#50504e" />
      <path d="M205 610Q210 572 245 574 275 574 290 615L372 780Q430 850 430 895 425 962 375 965 312 955 305 890L297 820z" fill="url(#face)" />
      <path d="M200 585Q205 545 245 545 290 545 308 595 275 545 240 560 210 562 200 585z" fill="#f4f4f0" />
      {/* elbow */}
      <path d="M98 520Q96 490 130 455L255 353 300 357 345 480 300 520 325 560 310 590 270 545 215 550 190 618 155 600Q98 560 98 520z" fill="#5f5f5c" />
      <path d="M98 520Q96 490 130 455L255 353 280 360 245 402 135 500Q110 520 120 560 98 540 98 520z" fill="#c3c3bd" />
      <path d="M120 500 245 400 250 406 130 515z" fill="#92928e" />
      <path d="M250 402 160 600" stroke="#b5b5b0" strokeWidth="7" />
      <path d="M98 520Q98 560 155 600L190 618" stroke="#2c2c2a" strokeWidth="5" />
      <path d="M205 555Q245 520 315 548L318 575 300 585 280 555 215 560z" fill="#babab5" />
      <circle cx="307" cy="558" r="5" fill="#fff" />
      <path d="M262 515l20-3 16 18-25 2z" fill="#e9e9e4" />
      {/* wrist neck */}
      <path d="M250 400 285 358 315 380 370 450 330 492 305 470z" fill="#6f6f6c" />
      <path d="M255 380 300 352 312 370 285 410 300 450 275 425z" fill="#f3f3ef" />
      <path d="M280 365l18 3-14 25 16 48z" fill="#7a7a77" />
      <path d="M272 500l60-30 8 15-40 30z" fill="#2b2b2a" />
      {/* forearm */}
      <path d="M325 310 340 293 365 298 410 262 420 300 335 345z" fill="#8b8b87" />
      <path d="M327 308l22-12 12 20-20 8z" fill="#2e3436" />
      <path d="M375 290l35-22 8 20-30 20z" fill="#f4f4f0" />
      <path d="M308 385 318 345 420 278Q470 258 505 285 525 305 512 350L460 395 375 462 345 440z" fill="#b9b9b4" />
      <path d="M310 388 430 302Q480 280 495 310 500 340 470 375L375 458 350 440z" fill="#5e5e5b" />
      <path d="M308 385 372 452" stroke="#262625" strokeWidth="6" />
      <path d="M415 268 428 222Q445 208 490 209L503 232 530 262 533 305 515 335 505 280Q470 262 415 282z" fill="#73736f" />
      <path d="M416 250 428 222Q445 208 490 209L482 234Q450 236 416 254z" fill="#eeeee8" />
      <path d="M484 234 508 278 524 262 497 215z" fill="#d2d2cc" />
      <path d="M488 238l14 34" stroke="#333" strokeWidth="5" />
      <path d="M505 335l25-25 11 45-20 25-50 10z" fill="#262626" />
      <path d="M515 345Q505 370 513 417M500 375 553 380" stroke="#fff" strokeWidth="7" />
      {/* chute */}
      <path d="M1008 933 1170 943 1156 1080 968 1080z" fill="#4b4b49" />
      <path d="M1004 893 1010 890 1014 934 985 1068 970 1080z" fill="#353533" />
      <path d="M1172 903 1179 901 1178 958 1162 1080 1154 1080 1168 950z" fill="#353533" />
    </g>
  );
}

function Rack() {
  return (
    <g transform="translate(780 570) scale(.42088 .33333)">
      {[
        [285, 370, 405],
        [408, 498, 533],
        [543, 630, 666],
      ].map(([a, b, c]) => (
        <g key={a}>
          <path d={`M140 ${a} 430 ${a + 16} 430 ${b + 16} 140 ${b}z`} fill="url(#shelf)" />
          <path d={`M140 ${b} 430 ${b + 16} 430 ${c + 20} 140 ${c}z`} fill="#31312f" />
        </g>
      ))}
      {/* stored parts */}
      <path d="M148 300 160 262 232 265 236 300 225 345 150 335z" fill="#6c6c69" />
      <path d="M148 300 160 262 232 265 236 300z" fill="#f2f2ee" />
      <ellipse cx="192" cy="284" rx="34" ry="17" fill="#5c5c59" />
      <ellipse cx="194" cy="290" rx="28" ry="12" fill="#9c9c98" />
      <path d="M273 268V330Q306 352 340 330V268z" fill="url(#arm)" />
      <ellipse cx="306" cy="268" rx="33" ry="20" fill="#efefeb" />
      <ellipse cx="307" cy="267" rx="12" ry="7" fill="#555" />
      <path d="M215 335h10v20h-10zM378 345h12v22h-12zM145 330h8v18h-8zM392 295h12v25h-12z" fill="#222" />
      <path d="M155 405h38v60l-38 5z" fill="#646461" />
      <path d="M193 420l12 15-8 32h-12zM160 420h6v8h-6zM160 433h6v8h-6z" fill="#e8e8e3" />
      <path d="M256 470 265 415h12v35h45v-33l10 40-6 25z" fill="#f2f2ee" />
      <path d="M277 418h45l-2 28h-40z" fill="#777774" />
      <ellipse cx="286" cy="458" rx="7" ry="4" fill="#333" />
      <ellipse cx="311" cy="458" rx="7" ry="4" fill="#333" />
      <path d="M230 452h10v10h-10zM335 458h10v12h-10z" fill="#333" />
      <path d="M380 435l24-8v30h-20z" fill="#e0e0db" />
      <path d="M163 570V595Q192 615 222 595V570z" fill="#333331" />
      <ellipse cx="192" cy="566" rx="29" ry="14" fill="#a5a5a1" />
      <ellipse cx="190" cy="556" rx="25" ry="14" fill="#f5f5f1" />
      <path d="M182 540h20v14h-20z" fill="#888" />
      <path d="M288 580q30 20 62 0v24q-30 24-62 0z" fill="#333331" />
      <path d="M288 550h55l-20 30h-12z" fill="#3c3c3a" />
      <path d="M380 560l26 10v45l-22-10z" fill="#555" />
      <path d="M235 583h10v12h-10z" fill="#333" />
      {/* post and handle */}
      <path d="M60 480Q75 470 102 474V496H66z" fill="#e9e9e4" />
      <path d="M60 488Q75 486 102 488V497H66z" fill="#77776f" />
      <path d="M136 300 144 255 160 630 167 775 155 822z" fill="#3a3a38" />
      <path d="M92 300H138L157 822 118 820z" fill="#6f6f6b" />
      <path d="M92 300 107 252 144 255 138 300z" fill="#f3f3ef" />
      {/* table legs */}
      <path d="M590 800h36v80l-5 14-31-2z" fill="#6d6d69" />
      <path d="M918 800h35v105l-5 18-30-2z" fill="#6d6d69" />
      <path d="M1152 800h22v77h-22z" fill="#7a7a76" />
    </g>
  );
}

function Gripper() {
  return (
    <g transform="translate(780 570) scale(.42088 .33333)">
      <path d="M515 800 523 1050" stroke="#4a48c8" strokeWidth="4" />
      <path d="M524 1033 570 1037" stroke="#b8383c" strokeWidth="9" />
      <path d="M526 1030v-30" stroke="#3a9a3c" strokeWidth="6" />
      <path
        d="M460 1025V1105L450 1130V1165M578 1040 586 1125 597 1140V1165M455 1160H592L605 1195V1243L530 1249 443 1237V1190z"
        stroke="#fff"
        strokeWidth="17"
        strokeLinejoin="round"
        strokeLinecap="round"
      />
      <path d="M458 1164 590 1170 606 1207 443 1192z" fill="#6e6cba" />
      <path d="M443 1192 606 1207V1243L530 1248 443 1236z" fill="#201e62" />
      <path d="M460 1027V1108L450 1130 453 1190" stroke="#6c0a3c" strokeWidth="10" />
      <path d="M460 1025V1045M451 1115v20" stroke="#c8082c" strokeWidth="10" />
      <path d="M578 1038 586 1122 596 1140 595 1203" stroke="#6c0a3c" strokeWidth="10" />
      <path d="M578 1036l2 22M594 1122v25" stroke="#c8082c" strokeWidth="10" />
      <path d="M460 1160 588 1167" stroke="#fff" strokeWidth="8" />
      <path d="M532 1228 558 1103" stroke="#0be01a" strokeWidth="6" />
      <path d="M521 1050 528 1244" stroke="#0a08f0" strokeWidth="8" />
      <path d="M528 1242 606 1247" stroke="#c8082c" strokeWidth="8" />
      <path d="M607 1247 706 1256" stroke="#f00" strokeWidth="9" />
    </g>
  );
}

function Triad() {
  return (
    <>
      <g transform="translate(310 740) scale(.35714 .33333)">
        <path d="M247 690 290 610" stroke="#00c400" strokeWidth="12" />
        <path d="M305 583 265 605Q275 635 303 630z" fill="#00a800" />
        <path d="M247 692 370 702" stroke="#f00" strokeWidth="13" />
        <path d="M413 706 360 680V722z" fill="#e00000" />
        <path d="M247 690 232 590" stroke="#00f" strokeWidth="13" />
        <path d="M226 541 210 590Q230 602 251 588z" fill="#0000e0" />
      </g>
      <g fontFamily="'Liberation Sans', sans-serif" fontSize="19">
        <text x="383" y="919" fill="#1a1aff">
          Z
        </text>
        <text x="414" y="935" fill="#0b0">
          Y
        </text>
        <text x="461" y="982" fill="#f00">
          X
        </text>
      </g>
    </>
  );
}

function Scene() {
  return (
    <svg className="absolute inset-0 h-full w-full" viewBox="320 225 1710 823" preserveAspectRatio="xMidYMid slice" fill="none">
      <Floor />
      <RobotArm />
      <text
        transform="translate(988 370) rotate(-36)"
        fontFamily="'Liberation Sans', sans-serif"
        fontWeight="bold"
        fontSize="10"
        fill="#d4142e"
      >
        ABB
      </text>
      <Rack />
      <Gripper />
      <Triad />
    </svg>
  );
}

function UpdateDialog() {
  const button = 'h-[42px] w-[123px] border pb-[2px] text-lg leading-6 text-black';
  return (
    <div
      role="dialog"
      aria-labelledby="dialog-title"
      className="absolute left-[630px] top-[360px] w-[473px] border border-[#8a5a2a] bg-white shadow-[0_6px_24px_rgba(0,0,0,0.35)]"
    >
      <div className="flex h-[46px] items-center justify-between bg-[#703800] pl-[11px] pr-[19px] text-white">
        <h2 id="dialog-title" className="pb-px text-lg leading-6">
          更新位置
        </h2>
        <button aria-label="关闭">
          <Ico box="0 0 16 16" className="h-4 w-4">
            <path d="M0 0l16 16M16 0 0 16" stroke="#fff" strokeWidth="1.5" />
          </Ico>
        </button>
      </div>
      <div className="flex h-[138px] items-center gap-[13px] pl-9">
        <span className="flex h-12 w-12 items-center justify-center rounded-full border border-[#0a4a8c] bg-[#0464bf] font-['Open_Sans',sans-serif] text-[34px] leading-none text-white">
          ?
        </span>
        <p className="text-lg leading-6 text-black">是否希望更新'Grpper'的位置?</p>
      </div>
      <div className="flex h-[81px] items-center gap-[14px] bg-[#f0f0f0] pb-[5px] pl-11">
        <button className={`${button} border-[#0078d7] bg-[#e5f1fb]`}>是(Y)</button>
        <button className={`${button} border-[#adadad] bg-[#e1e1e1]`}>否(N)</button>
        <button className={`${button} border-[#adadad] bg-[#e1e1e1]`}>取消</button>
      </div>
    </div>
  );
}

function Viewport() {
  return (
    <section className="flex min-w-0 flex-1 flex-col border border-[#5b8bc3]">
      <DockHeader
        action={
          <Ico box="0 0 12 12" className="h-3 w-3">
            <path d="M1 1h10v10H1z" stroke="#000" strokeWidth="1.5" />
            <path d="M1 2.5h10" stroke="#000" strokeWidth="3" />
          </Ico>
        }
      >
        <div className={`${DOCK_TAB} h-[29px] gap-[10px] border-b-0 bg-linear-to-b from-white to-[#e4eef9] px-[10px]`}>
          <span className="text-base font-bold">gongzuotai: 视图1</span>
          <button aria-label="关闭视图" className="pt-1">
            <CloseGlyph />
          </button>
        </div>
      </DockHeader>
      <div className="relative flex-1 overflow-hidden bg-linear-to-b from-[#d7e8ff] to-[#b0c1d3]">
        <Scene />
        <ViewToolbar />
        <UpdateDialog />
        <svg className="pointer-events-none absolute left-[430px] top-[540px]" width="400" height="150" viewBox="750 765 400 150" fill="none">
          <ellipse cx="1056" cy="808" rx="77" ry="28" stroke="#fb3434" strokeWidth="4" />
          <path d="M763 900 966 823l-2-6 18 4-13 12-2-5z" fill="#fb3434" stroke="#fb3434" />
        </svg>
      </div>
    </section>
  );
}

/* ---------- documents ---------- */

function Documents() {
  return (
    <aside className="flex w-[314px] shrink-0 flex-col border border-r-0 border-[#5b8bc3] bg-[#d5e4f3]">
      <DockHeader>
        <button className={`${DOCK_TAB} h-7 border-b-0 bg-[#dce6f1] px-[9px] font-bold`}>文档</button>
      </DockHeader>
      <div role="radiogroup" aria-label="文档来源" className="flex h-[34px] items-center gap-[14px] pl-[9px] text-black">
        {['工作站', '搜索', '浏览'].map((name, i) => (
          <label key={name} className="flex items-center gap-2">
            <input
              type="radio"
              name="scope"
              defaultChecked={i === 0}
              className="h-5 w-5 appearance-none rounded-full border-2 border-[#333] bg-white checked:bg-[#333] checked:shadow-[inset_0_0_0_3px_#fff]"
            />
            <Song>{name}</Song>
          </label>
        ))}
      </div>
      <button className="flex h-[30px] items-center gap-[10px] pb-1 pl-[7px] text-lg leading-6 text-black">
        添加
        <Caret className="text-black" />
      </button>
      <div className="mx-px flex-1 border border-[#828790] bg-white" />
      <p className="flex h-[22px] items-center pl-1 text-black">
        <Song>0 项</Song>
      </p>
    </aside>
  );
}

/* ---------- output ---------- */

const MESSAGES = [
  '第二个点： [-62.14 -1.52 215.30]',
  '距离: 224.29mm [-62.86 -1.24 215.30]',
  'SC_jiajutai 安装到 Grpper',
  '撤消: SC_jiajutai 安装到 Grpper.',
  '撤消: 可见.',
  '撤消: 移动.',
  'Grpper 安装到 IRB120_3_58__01',
  '撤消: Grpper 安装到 IRB120_3_58__01.',
];

function Output() {
  const head = 'border-r border-[#e2e2e2] p-0 pl-[9px] font-normal';
  return (
    <section className="flex h-[262px] shrink-0 flex-col border border-r-0 border-[#5b8bc3] bg-white">
      <DockHeader>
        <button className={`${DOCK_TAB} h-7 border-b-0 bg-[#dce6f1] px-[9px] font-bold`}>输出</button>
      </DockHeader>
      <div className="flex min-h-0 flex-1 border-t-4 border-[#f0f0f0]">
        <div className="min-w-0 flex-1">
          <table className="w-full table-fixed text-left text-black">
            <thead>
              <tr className="h-[30px]">
                <th className="w-[766px] border-r border-[#e2e2e2] p-0 pl-2 font-normal">
                  <div className="flex items-center">
                    <label htmlFor="source" className="w-[85px] whitespace-nowrap">
                      <Song>信息来自:</Song>
                    </label>
                    <span className="relative">
                      <select
                        id="source"
                        className="h-[26px] w-[194px] appearance-none bg-[#efefef] pl-[5px] font-['Noto_Sans_CJK_SC',sans-serif] text-[19px] leading-[26px]"
                      >
                        <option>全部信息</option>
                      </select>
                      <span className="pointer-events-none absolute inset-y-0 right-0 flex w-[25px] items-center justify-center border-l border-white">
                        <Caret className="text-black" />
                      </span>
                    </span>
                  </div>
                </th>
                <th className={`${head} w-[182px]`}>
                  <Song>时间</Song>
                </th>
                <th className={`${head} w-[181px]`}>
                  <Song>种类</Song>
                </th>
                <th />
              </tr>
            </thead>
            <tbody>
              {MESSAGES.map((message) => (
                <tr key={message} className="h-6 leading-6">
                  <td className="p-0 pl-[6px]">
                    <div className="flex h-6 items-center gap-1">
                      <Ico box="0 0 18 18" className="h-[17px] w-[17px]">
                        <circle cx="9" cy="9" r="8" fill="#fff" stroke="#8c9cbc" strokeWidth="1.5" />
                        <path d="M8 4h2.5v2H8zM7 7.5h3.5V13H12v1.500H7V13h1.200V9H7z" fill="#1f4fc4" />
                      </Ico>
                      <Song>{message}</Song>
                    </div>
                  </td>
                  <td className="p-0 pl-[9px]">
                    <div className="flex h-6 items-center">
                      <Song>2021/1/28 15:...</Song>
                    </div>
                  </td>
                  <td className="p-0 pl-[9px]">
                    <div className="flex h-6 items-center">
                      <Song>概述</Song>
                    </div>
                  </td>
                  <td />
                </tr>
              ))}
            </tbody>
          </table>
        </div>
        <div className="flex w-[25px] shrink-0 flex-col items-center bg-[#f0f0f0] text-[#555]">
          <ChevronUp className="h-7 w-5 shrink-0" strokeWidth={2.5} />
          <div className="flex-1" />
          <div className="h-[26px] w-full bg-[#cdcdcd]" />
          <ChevronDown className="h-7 w-5 shrink-0" strokeWidth={2.5} />
        </div>
      </div>
    </section>
  );
}

/* ---------- status bar ---------- */

function StatusBar() {
  const cell = 'flex items-center border-l border-[#8fb0d8] shadow-[inset_1px_0_0_#eef5fd]';
  return (
    <footer className="flex h-[33px] shrink-0 items-stretch border-b-2 border-black bg-linear-to-b from-[#dbe8f5] to-[#b4c6dd] text-lg leading-6 text-[#1e395b]">
      <p className="flex flex-1 items-center pl-3 text-base">撤消: Grpper 安装到 IRB120_3_58__01.</p>
      <div className={`${cell} w-[203px] gap-2 pl-[9px]`}>
        <button className="flex items-center gap-2 whitespace-nowrap">
          选择方式
          <Caret className="text-[#1e395b]" />
        </button>
        <button className="flex items-center gap-2 whitespace-nowrap">
          捕捉模式
          <Caret className="text-[#1e395b]" />
        </button>
      </div>
      <div className={`${cell} w-[112px] whitespace-nowrap pl-[5px] text-[17px]`}>UCS : 工作站</div>
      <div className={`${cell} w-[175px] pl-1`}>
        <input
          aria-label="坐标"
          readOnly
          defaultValue="125.82  120.68"
          className="h-[26px] w-[167px] border-2 border-[#a7c0e2] bg-[#f7fbff] font-['Liberation_Mono',monospace] text-base text-black"
        />
      </div>
      <div className={`${cell} w-[154px] pl-[2px]`}>
        <span className="flex h-[27px] w-[148px] items-center justify-between whitespace-nowrap bg-[#ffff00] px-[6px] text-[#222]">
          <span>控制器状态:</span>
          <span>1/1</span>
        </span>
      </div>
    </footer>
  );
}

export default function App() {
  return (
    <div className="flex h-screen flex-col overflow-hidden bg-[#bfdbff] font-['Noto_Sans_CJK_SC',sans-serif]">
      <Defs />
      <header className="bg-[#fefefe]">
        <TitleBar />
        <RibbonTabs />
      </header>
      <Ribbon />
      <main className="flex min-h-0 flex-1 gap-[5px] pt-[3px]">
        <LayoutPanel />
        <div className="flex min-w-0 flex-1 flex-col gap-[6px]">
          <div className="flex min-h-0 flex-1 gap-[5px]">
            <Viewport />
            <Documents />
          </div>
          <Output />
        </div>
      </main>
      <StatusBar />
    </div>
  );
}
